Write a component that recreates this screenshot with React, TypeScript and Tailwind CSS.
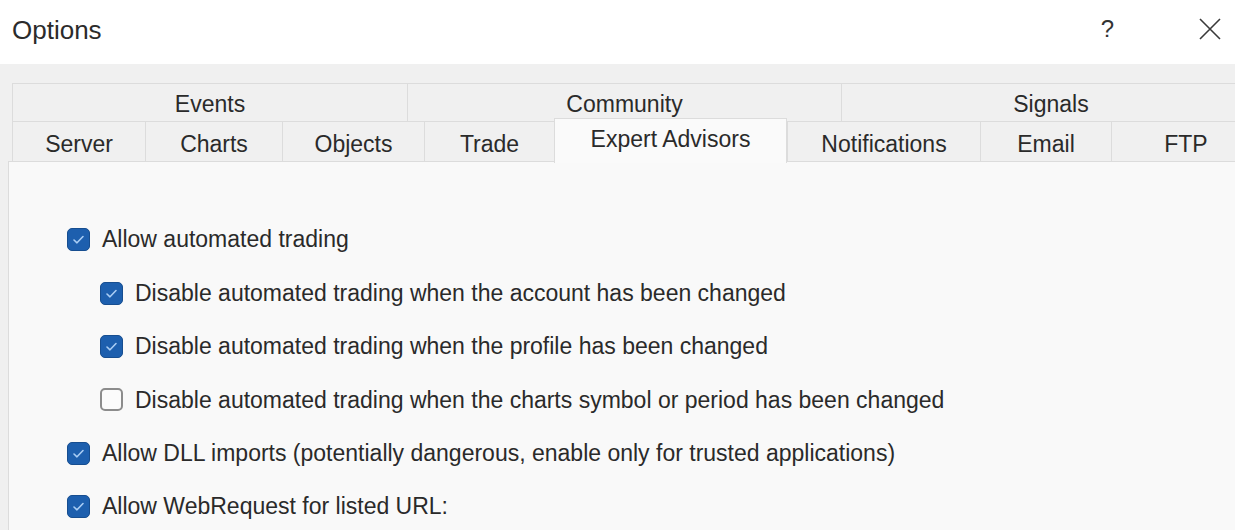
import React from "react";

const font = { fontFamily: '"Liberation Sans", Arial, sans-serif' };

function Check({ checked }: { checked: boolean }) {
  if (!checked) {
    return (
      <div className="w-[23px] h-[23px] shrink-0 rounded-[5px] border-[2px] border-[#8c8c8c] bg-[#fbfbfb]" />
    );
  }
  return (
    <div className="w-[23px] h-[23px] shrink-0 rounded-[5px] bg-[#1d5fae] border border-[#174e90] flex items-center justify-center">
      <svg width="13" height="11" viewBox="0 0 13 11" fill="none">
        <path d="M2 6 L5 8.8 L11 2.5" stroke="#a9cdf4" strokeWidth="1.6" strokeLinecap="round" strokeLinejoin="round" />
      </svg>
    </div>
  );
}

function Row({ checked, indent, text }: { checked: boolean; indent?: boolean; text: string }) {
  return (
    <div className={`h-[53.4px] flex items-center gap-[12px] ${indent ? "pl-[33px]" : ""}`}>
      <Check checked={checked} />
      <span className="text-[23px] text-[#2a2a2a] whitespace-nowrap">{text}</span>
    </div>
  );
}

export default function App() {
  const topTabs = [
    { label: "Events", w: "w-[395px]" },
    { label: "Community", w: "w-[434px]" },
    { label: "Signals", w: "flex-1" },
  ];
  const bottomTabs = [
    { label: "Server", w: "w-[133px]" },
    { label: "Charts", w: "w-[137px]" },
    { label: "Objects", w: "w-[142px]" },
    { label: "Trade", w: "w-[130px]" },
    { label: "Expert Advisors", w: "w-[233px]", active: true },
    { label: "Notifications", w: "w-[193px]" },
    { label: "Email", w: "w-[131px]" },
    { label: "FTP", w: "flex-1" },
  ];
  return (
    <div className="w-[1235px] h-[530px] overflow-hidden bg-[#f0f0f0] flex flex-col" style={font}>
      <div className="h-[64px] bg-white flex items-center pl-[12px] pr-[13px] shrink-0">
        <span className="text-[26px] text-[#2b2b2b] -mt-[4px]">Options</span>
        <div className="flex-1" />
        <span className="text-[24px] text-[#333] -mt-[6px] mr-[84px]">?</span>
        <svg width="24" height="24" viewBox="0 0 24 24" className="-mt-[6px]">
          <path d="M2 2 L22 22 M22 2 L2 22" stroke="#3a3a3a" strokeWidth="1.6" />
        </svg>
      </div>
      <div className="flex-1 flex flex-col pt-[19px] pl-[8px] w-[1260px]">
        <div className="pl-[4px] flex flex-col">
          <div className="flex h-[38px]">
            {topTabs.map((t) => (
              <div
                key={t.label}
                className={`${t.w} border-t border-l border-[#dcdcdc] bg-[#f0f0f0] flex items-center justify-center text-[23px] text-[#2a2a2a] pt-[3px]`}
              >
                {t.label}
              </div>
            ))}
          </div>
          <div className="flex h-[40px] items-end">
            {bottomTabs.map((t) =>
              t.active ? (
                <div
                  key={t.label}
                  className={`${t.w} h-[45px] -mb-[2px] relative z-10 border-t border-l border-r border-[#dcdcdc] bg-[#fafafa] flex items-center justify-center text-[23px] text-[#2a2a2a] pb-[3px]`}
                >
                  {t.label}
                </div>
              ) : (
                <div
                  key={t.label}
                  className={`${t.w} h-[40px] border-t border-l border-[#dcdcdc] bg-[#f0f0f0] flex items-center justify-center text-[23px] text-[#2a2a2a] pt-[5px]`}
                >
                  {t.label}
                </div>
              )
            )}
          </div>
        </div>
        <div className="flex-1 border-t border-l border-[#dcdcdc] bg-[#f9f9f9] pl-[58px] pt-[51px] flex flex-col">
          <Row checked text="Allow automated trading" />
          <Row checked indent text="Disable automated trading when the account has been changed" />
          <Row checked indent text="Disable automated trading when the profile has been changed" />
          <Row checked={false} indent text="Disable automated trading when the charts symbol or period has been changed" />
          <Row checked text="Allow DLL imports (potentially dangerous, enable only for trusted applications)" />
          <Row checked text="Allow WebRequest for listed URL:" />
        </div>
      </div>
    </div>
  );
}
